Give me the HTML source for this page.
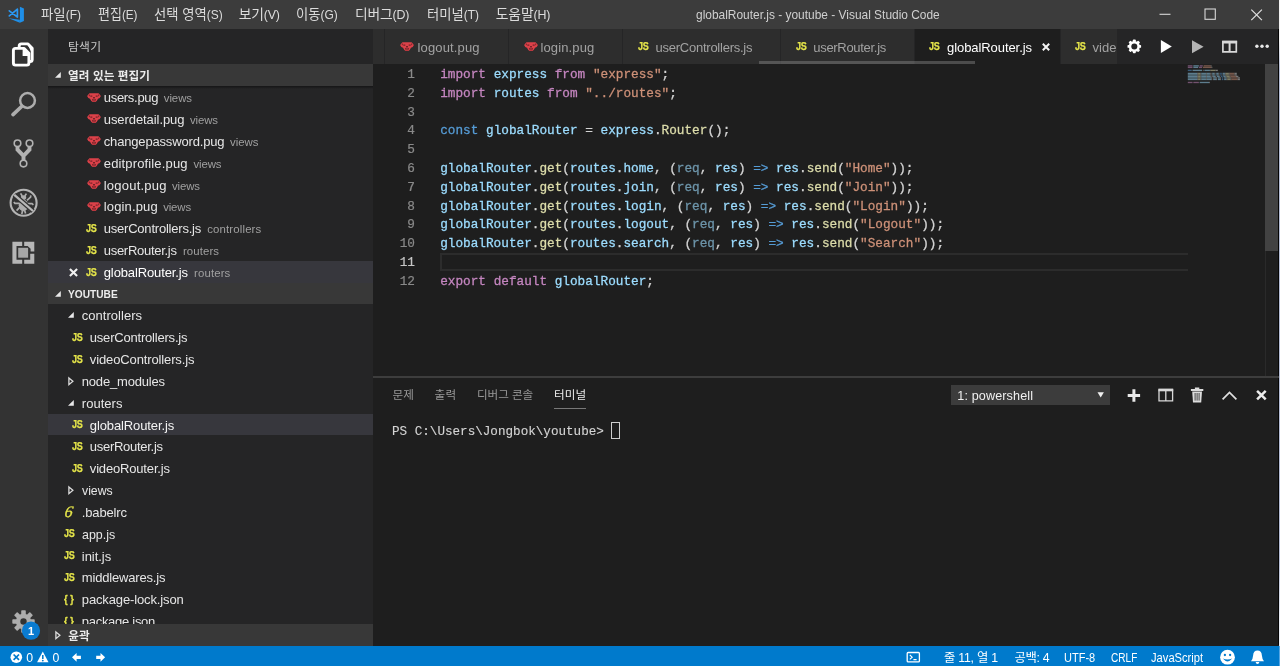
<!DOCTYPE html>
<html lang="ko"><head><meta charset="utf-8"><title>globalRouter.js - youtube - Visual Studio Code</title>
<style>
html,body{margin:0;padding:0;background:#1e1e1e;overflow:hidden}
body{width:1280px;height:666px;position:relative;font-family:'Liberation Sans','Noto Sans CJK KR',sans-serif}
#w{position:absolute;left:0;top:0;width:1280px;height:666px;will-change:transform}
.t{position:absolute;white-space:pre;line-height:20px;height:20px}
svg{position:absolute;overflow:visible}

.js{position:absolute;font-weight:700;color:#e4e44a;-webkit-text-stroke:.25px #e4e44a;font-size:11.6px;line-height:12px;height:12px;transform:scaleX(.78);transform-origin:0 50%;letter-spacing:-.2px;white-space:pre}
.br{position:absolute;font-weight:700;color:#e4e44a;font-size:11.5px;line-height:12px;height:12px;white-space:pre;letter-spacing:3.4px;transform:scaleX(.8);transform-origin:0 50%;-webkit-text-stroke:.3px #e4e44a}
.code{position:absolute;white-space:pre;font-family:'Liberation Mono','Noto Sans CJK KR',monospace;font-size:12.73px;line-height:18.8px;height:18.8px;color:#d4d4d4;-webkit-text-stroke:.28px}
.k{color:#c586c0}.v{color:#9cdcfe}.s{color:#ce9178}.b{color:#569cd6}.f{color:#dcdcaa}.u{color:#9cdcfe;opacity:.62}
.ln{position:absolute;white-space:pre;font-family:'Liberation Mono',monospace;font-size:12.73px;line-height:18.8px;height:18.8px;color:#8a8a8a;text-align:right;width:40px;-webkit-text-stroke:.2px}

</style></head><body><div id="w">
<div style="position:absolute;left:0px;top:0px;width:1280px;height:29.3px;background:#3c3c3c;"></div><div style="position:absolute;left:0px;top:29.3px;width:48px;height:616.7px;background:#333333;"></div><div style="position:absolute;left:48px;top:29.3px;width:324.5px;height:616.7px;background:#252526;"></div><div style="position:absolute;left:372.5px;top:29.3px;width:907.5px;height:35px;background:#252526;"></div><div style="position:absolute;left:372.5px;top:64.3px;width:907.5px;height:581.7px;background:#1e1e1e;"></div><div style="position:absolute;left:0px;top:645.5px;width:1280px;height:20.5px;background:#007acc;"></div><div style="position:absolute;left:48px;top:64.2px;width:324.5px;height:21.9px;background:#383838;"></div><div style="position:absolute;left:48px;top:282.6px;width:324.5px;height:21.6px;background:#383838;"></div><div style="position:absolute;left:48px;top:624.4px;width:324.5px;height:21.6px;background:#383838;z-index:5"></div><div style="position:absolute;left:48px;top:86.1px;width:324.5px;height:3.2px;background:linear-gradient(rgba(0,0,0,.42),rgba(0,0,0,0));"></div><div style="position:absolute;left:48px;top:261px;width:324.5px;height:21.6px;background:#37373d;"></div><div style="position:absolute;left:48px;top:413.7px;width:324.5px;height:21.6px;background:#37373d;"></div><svg style="left:0;top:0" width="40" height="29" viewBox="0 0 40 29">
<path d="M19.9 6.7 L23.9 8.4 V20.9 L19.9 22.7Z" fill="#1f8fe8"/>
<path d="M8.6 18.2 L19.9 19.7 V22.7 Z" fill="#1f8fe8"/>
<path d="M9.3 10.8 L17.4 17 V9.2 L9.3 15.9" fill="none" stroke="#2a98f2" stroke-width="1.7" stroke-linejoin="round" stroke-linecap="round"/>
</svg><svg style="left:1150px;top:0" width="130" height="29" viewBox="0 0 130 29">
<path d="M9.5 14.3h11" stroke="#d8d8d8" stroke-width="1.1" fill="none"/>
<rect x="55" y="9" width="10.3" height="10.3" stroke="#d8d8d8" stroke-width="1.1" fill="none"/>
<path d="M101.3 9.6 L111.9 20.2 M111.9 9.6 L101.3 20.2" stroke="#e0e0e0" stroke-width="1.2" fill="none"/></svg><svg style="left:0;top:29px" width="48" height="617" viewBox="0 29 48 617">
<!-- files -->
<g fill="none" stroke="#fff" stroke-width="2.9" stroke-linejoin="round">
<path d="M19.2 47 V46 Q19.2 43.9 21.3 43.9 H28 L32.2 48.2 V59.4 Q32.2 61.5 30.1 61.5 H29.4"/>
<path d="M15.5 48.4 H24.2 L28.9 53.2 V63 Q28.9 65.1 26.8 65.1 H15.5 Q13.4 65.1 13.4 63 V50.5 Q13.4 48.4 15.5 48.4Z"/>
</g>
<path d="M22.6 48.4 H24.6 L29 53 V56 H22.6Z" fill="#fff"/>
<path d="M27.4 43.9 H28.2 L32.3 48 V51 H30.8 Z" fill="#fff"/>
<!-- search -->
<g fill="none" stroke="#adadad">
<circle cx="27.5" cy="100.5" r="7.4" stroke-width="2.5"/>
<path d="M21.6 106.5 L13 114.6" stroke-width="3.7" stroke-linecap="round"/>
</g>
<!-- git -->
<g fill="none" stroke="#b2b2b2">
<path d="M17.5 146.5 V149.6 L23.5 155.8 V160.5 M29.5 146.5 V149.6 L23.5 155.8" stroke-width="3.9" stroke-linejoin="miter"/>
<circle cx="17.5" cy="143.3" r="3.3" stroke-width="1.6" fill="#333"/>
<circle cx="29.5" cy="143.3" r="3.3" stroke-width="1.6" fill="#333"/>
<circle cx="23.5" cy="163.6" r="3.3" stroke-width="1.6" fill="#333"/>
</g>
<!-- debug -->
<g>
<circle cx="23.6" cy="202.8" r="13" fill="none" stroke="#b4b4b4" stroke-width="2.1"/>
<g fill="#adadad" stroke="#adadad">
<ellipse cx="23.4" cy="205.3" rx="4.7" ry="5.9" stroke="none"/>
<ellipse cx="23.5" cy="197.6" rx="2.7" ry="2.3" stroke="none"/>
<path d="M19 203.4 H15 L13.8 202 M19.4 207.6 L16.6 210.6 M28 203.6 H32 L33.4 204.8 M27 200.4 L30.6 197 L30.8 195.4 M27.4 207.6 L30.2 210.6 M22.2 196 L20.6 193.4 M24.8 196 L26.4 193.6 M22.6 210.4 L21.8 214 M24.6 210.4 L25.6 213.6" stroke-width="1.7" fill="none"/>
</g>
<path d="M14.3 194.8 L33 211" stroke="#333" stroke-width="4.8"/>
<path d="M14.3 194.8 L33 211" stroke="#b9b9b9" stroke-width="2.3"/>
</g>
<!-- extensions -->
<g fill="#b6b6b6">
<path d="M12.4 241.8 H22.2 V245.9 H16.5 V259.7 H22.2 V263.8 H12.4 Z"/>
<path d="M24.2 241.8 H34.3 V251.6 H30.6 V248.8 L27.6 245.9 H24.2 Z"/>
<path d="M24.2 259.7 H30.2 V253.7 H34.3 V263.8 H24.2 Z"/>
<rect x="18.2" y="247.8" width="9.9" height="9.9" fill="#a6a6a6"/>
</g>
<!-- gear -->
<g transform="translate(23.5 621.5)" fill="#adadad">
<circle r="7.7"/>
<g id="teeth"><rect x="-2.3" y="-11.2" width="4.6" height="22.4" rx=".8"/><rect x="-2.3" y="-11.2" width="4.6" height="22.4" rx=".8" transform="rotate(45)"/><rect x="-2.3" y="-11.2" width="4.6" height="22.4" rx=".8" transform="rotate(90)"/><rect x="-2.3" y="-11.2" width="4.6" height="22.4" rx=".8" transform="rotate(135)"/></g>
<circle r="3.2" fill="#333"/>
</g>
<circle cx="31" cy="630.7" r="9.1" fill="#0a7bd0"/>
</svg><svg style="left:55.1px;top:72.3px;" width="6" height="6" viewBox="0 0 6 6"><path d="M5.8 0 V5.8 H0Z" fill="#e8e8e8"/></svg><svg style="left:55.1px;top:290.59999999999997px;" width="6" height="6" viewBox="0 0 6 6"><path d="M5.8 0 V5.8 H0Z" fill="#e8e8e8"/></svg><svg style="left:54.6px;top:631.1999999999999px;z-index:6;" width="6" height="9" viewBox="0 0 6 9"><path d="M0.9 0.9 L4.9 4.3 L0.9 7.7Z" fill="none" stroke="#dcdcdc" stroke-width="1.3"/></svg><svg style="left:86.5px;top:92.51499999999999px" width="14" height="9.2" viewBox="0 0 14 9.2"><path d="M2.4 0.2 H11.6 L13.9 3 L12.7 4.9 L11 5.7 L9.7 8.1 L8.3 9 H5.7 L4.3 8.1 L3 5.7 L1.3 4.9 L0.1 3Z" fill="#dc4149"/><path d="M3.3 2.4h2v1.4H3.3zM8.7 2.4h2v1.4H8.7zM6 3.9h2v1.4H6zM5 6.3 L6.6 5.6 V8.6 H5.9Z M9 6.3 L7.4 5.6 V8.6 H8.1Z M1.6 2.6 L3 1 L2.6 3.6Z M12.4 2.6 L11 1 L11.4 3.6Z" fill="#5a1c20" opacity=".8"/></svg><svg style="left:86.5px;top:114.345px" width="14" height="9.2" viewBox="0 0 14 9.2"><path d="M2.4 0.2 H11.6 L13.9 3 L12.7 4.9 L11 5.7 L9.7 8.1 L8.3 9 H5.7 L4.3 8.1 L3 5.7 L1.3 4.9 L0.1 3Z" fill="#dc4149"/><path d="M3.3 2.4h2v1.4H3.3zM8.7 2.4h2v1.4H8.7zM6 3.9h2v1.4H6zM5 6.3 L6.6 5.6 V8.6 H5.9Z M9 6.3 L7.4 5.6 V8.6 H8.1Z M1.6 2.6 L3 1 L2.6 3.6Z M12.4 2.6 L11 1 L11.4 3.6Z" fill="#5a1c20" opacity=".8"/></svg><svg style="left:86.5px;top:136.17499999999998px" width="14" height="9.2" viewBox="0 0 14 9.2"><path d="M2.4 0.2 H11.6 L13.9 3 L12.7 4.9 L11 5.7 L9.7 8.1 L8.3 9 H5.7 L4.3 8.1 L3 5.7 L1.3 4.9 L0.1 3Z" fill="#dc4149"/><path d="M3.3 2.4h2v1.4H3.3zM8.7 2.4h2v1.4H8.7zM6 3.9h2v1.4H6zM5 6.3 L6.6 5.6 V8.6 H5.9Z M9 6.3 L7.4 5.6 V8.6 H8.1Z M1.6 2.6 L3 1 L2.6 3.6Z M12.4 2.6 L11 1 L11.4 3.6Z" fill="#5a1c20" opacity=".8"/></svg><svg style="left:86.5px;top:158.00499999999997px" width="14" height="9.2" viewBox="0 0 14 9.2"><path d="M2.4 0.2 H11.6 L13.9 3 L12.7 4.9 L11 5.7 L9.7 8.1 L8.3 9 H5.7 L4.3 8.1 L3 5.7 L1.3 4.9 L0.1 3Z" fill="#dc4149"/><path d="M3.3 2.4h2v1.4H3.3zM8.7 2.4h2v1.4H8.7zM6 3.9h2v1.4H6zM5 6.3 L6.6 5.6 V8.6 H5.9Z M9 6.3 L7.4 5.6 V8.6 H8.1Z M1.6 2.6 L3 1 L2.6 3.6Z M12.4 2.6 L11 1 L11.4 3.6Z" fill="#5a1c20" opacity=".8"/></svg><svg style="left:86.5px;top:179.83499999999998px" width="14" height="9.2" viewBox="0 0 14 9.2"><path d="M2.4 0.2 H11.6 L13.9 3 L12.7 4.9 L11 5.7 L9.7 8.1 L8.3 9 H5.7 L4.3 8.1 L3 5.7 L1.3 4.9 L0.1 3Z" fill="#dc4149"/><path d="M3.3 2.4h2v1.4H3.3zM8.7 2.4h2v1.4H8.7zM6 3.9h2v1.4H6zM5 6.3 L6.6 5.6 V8.6 H5.9Z M9 6.3 L7.4 5.6 V8.6 H8.1Z M1.6 2.6 L3 1 L2.6 3.6Z M12.4 2.6 L11 1 L11.4 3.6Z" fill="#5a1c20" opacity=".8"/></svg><svg style="left:86.5px;top:201.665px" width="14" height="9.2" viewBox="0 0 14 9.2"><path d="M2.4 0.2 H11.6 L13.9 3 L12.7 4.9 L11 5.7 L9.7 8.1 L8.3 9 H5.7 L4.3 8.1 L3 5.7 L1.3 4.9 L0.1 3Z" fill="#dc4149"/><path d="M3.3 2.4h2v1.4H3.3zM8.7 2.4h2v1.4H8.7zM6 3.9h2v1.4H6zM5 6.3 L6.6 5.6 V8.6 H5.9Z M9 6.3 L7.4 5.6 V8.6 H8.1Z M1.6 2.6 L3 1 L2.6 3.6Z M12.4 2.6 L11 1 L11.4 3.6Z" fill="#5a1c20" opacity=".8"/></svg><span class="js" style="left:86.3px;top:221.89499999999998px">JS</span><span class="js" style="left:86.3px;top:243.725px">JS</span><span class="js" style="left:86.3px;top:265.555px">JS</span><svg style="left:69.4px;top:267.7px" width="9" height="9" viewBox="0 0 9 9"><path d="M0.9 0.9 L8.1 8.1 M8.1 0.9 L0.9 8.1" stroke="#f0f0f0" stroke-width="2.1"/></svg><svg style="left:68.4px;top:312.315px;" width="6" height="6" viewBox="0 0 6 6"><path d="M5.8 0 V5.8 H0Z" fill="#e8e8e8"/></svg><span class="js" style="left:72.4px;top:330.945px">JS</span><span class="js" style="left:72.4px;top:352.77500000000003px">JS</span><svg style="left:68.2px;top:376.90500000000003px;" width="6" height="9" viewBox="0 0 6 9"><path d="M0.9 0.9 L4.9 4.3 L0.9 7.7Z" fill="none" stroke="#dcdcdc" stroke-width="1.3"/></svg><svg style="left:68.4px;top:399.635px;" width="6" height="6" viewBox="0 0 6 6"><path d="M5.8 0 V5.8 H0Z" fill="#e8e8e8"/></svg><span class="js" style="left:72.4px;top:418.265px">JS</span><span class="js" style="left:72.4px;top:440.09499999999997px">JS</span><span class="js" style="left:72.4px;top:461.925px">JS</span><svg style="left:68.2px;top:486.055px;" width="6" height="9" viewBox="0 0 6 9"><path d="M0.9 0.9 L4.9 4.3 L0.9 7.7Z" fill="none" stroke="#dcdcdc" stroke-width="1.3"/></svg><span style="position:absolute;left:64.5px;top:503.685px;font:italic 400 16px/16px 'Liberation Serif',serif;color:#e4e44a;transform:skewX(-10deg);-webkit-text-stroke:.3px #e4e44a">6</span><span class="js" style="left:64.4px;top:527.415px">JS</span><span class="js" style="left:64.4px;top:549.245px">JS</span><span class="js" style="left:64.4px;top:571.0749999999999px">JS</span><span class="br" style="left:63.6px;top:592.9049999999999px">{}</span><span class="br" style="left:63.6px;top:614.735px">{}</span><div style="position:absolute;left:372.5px;top:29.3px;width:11.5px;height:35px;background:#2d2d2d;"></div><div style="position:absolute;left:384.6px;top:29.3px;width:123px;height:35px;background:#2d2d2d;"></div><div style="position:absolute;left:508.6px;top:29.3px;width:113.6px;height:35px;background:#2d2d2d;"></div><div style="position:absolute;left:623px;top:29.3px;width:157.2px;height:35px;background:#2d2d2d;"></div><div style="position:absolute;left:781px;top:29.3px;width:133.2px;height:35px;background:#2d2d2d;"></div><div style="position:absolute;left:915px;top:29.3px;width:145px;height:35px;background:#1e1e1e;"></div><div style="position:absolute;left:1060.6px;top:29.3px;width:56.4px;height:35px;background:#2d2d2d;"></div><div style="position:absolute;left:1117px;top:29.3px;width:163px;height:35px;background:#252526;"></div><div style="position:absolute;left:758.8px;top:61.2px;width:216.2px;height:3.2px;background:rgba(140,140,140,.42);"></div><svg style="left:400.3px;top:42.400000000000006px" width="14" height="9.2" viewBox="0 0 14 9.2"><path d="M2.4 0.2 H11.6 L13.9 3 L12.7 4.9 L11 5.7 L9.7 8.1 L8.3 9 H5.7 L4.3 8.1 L3 5.7 L1.3 4.9 L0.1 3Z" fill="#dc4149"/><path d="M3.3 2.4h2v1.4H3.3zM8.7 2.4h2v1.4H8.7zM6 3.9h2v1.4H6zM5 6.3 L6.6 5.6 V8.6 H5.9Z M9 6.3 L7.4 5.6 V8.6 H8.1Z M1.6 2.6 L3 1 L2.6 3.6Z M12.4 2.6 L11 1 L11.4 3.6Z" fill="#5a1c20" opacity=".8"/></svg><svg style="left:523.8px;top:42.400000000000006px" width="14" height="9.2" viewBox="0 0 14 9.2"><path d="M2.4 0.2 H11.6 L13.9 3 L12.7 4.9 L11 5.7 L9.7 8.1 L8.3 9 H5.7 L4.3 8.1 L3 5.7 L1.3 4.9 L0.1 3Z" fill="#dc4149"/><path d="M3.3 2.4h2v1.4H3.3zM8.7 2.4h2v1.4H8.7zM6 3.9h2v1.4H6zM5 6.3 L6.6 5.6 V8.6 H5.9Z M9 6.3 L7.4 5.6 V8.6 H8.1Z M1.6 2.6 L3 1 L2.6 3.6Z M12.4 2.6 L11 1 L11.4 3.6Z" fill="#5a1c20" opacity=".8"/></svg><span class="js" style="left:638px;top:40.4px">JS</span><span class="js" style="left:795.6px;top:40.4px">JS</span><span class="js" style="left:929.4px;top:40.4px">JS</span><svg style="left:1042.3px;top:42.9px" width="8" height="8" viewBox="0 0 8 8"><path d="M0.8 0.8 L7.2 7.2 M7.2 0.8 L0.8 7.2" stroke="#f4f4f4" stroke-width="2"/></svg><span class="js" style="left:1075px;top:40.4px">JS</span><svg style="left:1117px;top:29.3px" width="163" height="35" viewBox="1117 29.3 163 35">
<g transform="translate(1134.3 46.7)" fill="#fff"><circle r="5.5"/>
<rect x="-1.45" y="-6.8" width="2.9" height="13.6" rx=".7"/><rect x="-1.45" y="-6.8" width="2.9" height="13.6" rx=".7" transform="rotate(45)"/><rect x="-1.45" y="-6.8" width="2.9" height="13.6" rx=".7" transform="rotate(90)"/><rect x="-1.45" y="-6.8" width="2.9" height="13.6" rx=".7" transform="rotate(135)"/>
<circle r="3" fill="#252526"/></g>
<path d="M1160.9 40.4 L1171.8 46.9 L1160.9 53.4Z" fill="#fff"/>
<path d="M1192 40.6 L1203.6 47.1 L1192 53.6Z" fill="#b4b4b4"/>
<path d="M1222.9 42.2 H1236.3 V52.2 H1222.9Z" fill="none" stroke="#d8d8d8" stroke-width="1.7"/><path d="M1229.6 43 V52.4" fill="none" stroke="#d8d8d8" stroke-width="2"/>
<path d="M1222.1 40.9 H1237.1 V43.8 H1222.1Z" fill="#d8d8d8"/>
<circle cx="1256.9" cy="46.5" r="1.7" fill="#e8e8e8"/><circle cx="1262" cy="46.5" r="1.7" fill="#e8e8e8"/><circle cx="1267.2" cy="46.5" r="1.7" fill="#e8e8e8"/>
</svg><div style="position:absolute;left:440.4px;top:253.3px;width:747.4px;height:2.1px;background:#2c2c2c;"></div><div style="position:absolute;left:440.4px;top:268.6px;width:747.4px;height:2.1px;background:#2c2c2c;"></div><div style="position:absolute;left:440.4px;top:253.3px;width:2px;height:17.4px;background:#2c2c2c;"></div><div class="ln" style="left:375px;top:66.00px">1</div><div class="code" style="left:440.2px;top:66.00px"><span class="k">import</span> <span class="v">express</span> <span class="k">from</span> <span class="s">"express"</span>;</div><div class="ln" style="left:375px;top:84.80px">2</div><div class="code" style="left:440.2px;top:84.80px"><span class="k">import</span> <span class="v">routes</span> <span class="k">from</span> <span class="s">"../routes"</span>;</div><div class="ln" style="left:375px;top:103.60px">3</div><div class="ln" style="left:375px;top:122.40px">4</div><div class="code" style="left:440.2px;top:122.40px"><span class="b">const</span> <span class="v">globalRouter</span> = <span class="v">express</span>.<span class="f">Router</span>();</div><div class="ln" style="left:375px;top:141.20px">5</div><div class="ln" style="left:375px;top:160.00px">6</div><div class="code" style="left:440.2px;top:160.00px"><span class="v">globalRouter</span>.<span class="f">get</span>(<span class="v">routes</span>.<span class="v">home</span>, (<span class="u">req</span>, <span class="v">res</span>) <span class="b">=&gt;</span> <span class="v">res</span>.<span class="f">send</span>(<span class="s">"Home"</span>));</div><div class="ln" style="left:375px;top:178.80px">7</div><div class="code" style="left:440.2px;top:178.80px"><span class="v">globalRouter</span>.<span class="f">get</span>(<span class="v">routes</span>.<span class="v">join</span>, (<span class="u">req</span>, <span class="v">res</span>) <span class="b">=&gt;</span> <span class="v">res</span>.<span class="f">send</span>(<span class="s">"Join"</span>));</div><div class="ln" style="left:375px;top:197.60px">8</div><div class="code" style="left:440.2px;top:197.60px"><span class="v">globalRouter</span>.<span class="f">get</span>(<span class="v">routes</span>.<span class="v">login</span>, (<span class="u">req</span>, <span class="v">res</span>) <span class="b">=&gt;</span> <span class="v">res</span>.<span class="f">send</span>(<span class="s">"Login"</span>));</div><div class="ln" style="left:375px;top:216.40px">9</div><div class="code" style="left:440.2px;top:216.40px"><span class="v">globalRouter</span>.<span class="f">get</span>(<span class="v">routes</span>.<span class="v">logout</span>, (<span class="u">req</span>, <span class="v">res</span>) <span class="b">=&gt;</span> <span class="v">res</span>.<span class="f">send</span>(<span class="s">"Logout"</span>));</div><div class="ln" style="left:375px;top:235.20px">10</div><div class="code" style="left:440.2px;top:235.20px"><span class="v">globalRouter</span>.<span class="f">get</span>(<span class="v">routes</span>.<span class="v">search</span>, (<span class="u">req</span>, <span class="v">res</span>) <span class="b">=&gt;</span> <span class="v">res</span>.<span class="f">send</span>(<span class="s">"Search"</span>));</div><div class="ln" style="left:375px;top:254.00px;color:#c6c6c6">11</div><div class="ln" style="left:375px;top:272.80px">12</div><div class="code" style="left:440.2px;top:272.80px"><span class="k">export</span> <span class="k">default</span> <span class="v">globalRouter</span>;</div><svg style="left:0;top:0" width="1280" height="100" viewBox="0 0 1280 100" opacity=".5"><rect x="1187.80" y="65.20" width="4.74" height="1.35" fill="#c586c0"/><rect x="1193.33" y="65.20" width="5.53" height="1.35" fill="#9cdcfe"/><rect x="1199.65" y="65.20" width="3.16" height="1.35" fill="#c586c0"/><rect x="1203.60" y="65.20" width="7.11" height="1.35" fill="#ce9178"/><rect x="1210.71" y="65.20" width="0.79" height="1.35" fill="#d4d4d4"/><rect x="1187.80" y="66.71" width="4.74" height="1.35" fill="#c586c0"/><rect x="1193.33" y="66.71" width="4.74" height="1.35" fill="#9cdcfe"/><rect x="1198.86" y="66.71" width="3.16" height="1.35" fill="#c586c0"/><rect x="1202.81" y="66.71" width="8.69" height="1.35" fill="#ce9178"/><rect x="1211.50" y="66.71" width="0.79" height="1.35" fill="#d4d4d4"/><rect x="1187.80" y="69.73" width="3.95" height="1.35" fill="#569cd6"/><rect x="1192.54" y="69.73" width="9.48" height="1.35" fill="#9cdcfe"/><rect x="1202.81" y="69.73" width="0.79" height="1.35" fill="#d4d4d4"/><rect x="1204.39" y="69.73" width="5.53" height="1.35" fill="#9cdcfe"/><rect x="1209.92" y="69.73" width="0.79" height="1.35" fill="#d4d4d4"/><rect x="1210.71" y="69.73" width="4.74" height="1.35" fill="#dcdcaa"/><rect x="1215.45" y="69.73" width="2.37" height="1.35" fill="#d4d4d4"/><rect x="1187.80" y="72.75" width="9.48" height="1.35" fill="#9cdcfe"/><rect x="1197.28" y="72.75" width="0.79" height="1.35" fill="#d4d4d4"/><rect x="1198.07" y="72.75" width="2.37" height="1.35" fill="#dcdcaa"/><rect x="1200.44" y="72.75" width="0.79" height="1.35" fill="#d4d4d4"/><rect x="1201.23" y="72.75" width="4.74" height="1.35" fill="#9cdcfe"/><rect x="1205.97" y="72.75" width="0.79" height="1.35" fill="#d4d4d4"/><rect x="1206.76" y="72.75" width="3.16" height="1.35" fill="#9cdcfe"/><rect x="1209.92" y="72.75" width="0.79" height="1.35" fill="#d4d4d4"/><rect x="1211.50" y="72.75" width="0.79" height="1.35" fill="#d4d4d4"/><rect x="1212.29" y="72.75" width="2.37" height="1.35" fill="#9cdcfe"/><rect x="1214.66" y="72.75" width="0.79" height="1.35" fill="#d4d4d4"/><rect x="1216.24" y="72.75" width="2.37" height="1.35" fill="#9cdcfe"/><rect x="1218.61" y="72.75" width="0.79" height="1.35" fill="#d4d4d4"/><rect x="1220.19" y="72.75" width="1.58" height="1.35" fill="#569cd6"/><rect x="1222.56" y="72.75" width="2.37" height="1.35" fill="#9cdcfe"/><rect x="1224.93" y="72.75" width="0.79" height="1.35" fill="#d4d4d4"/><rect x="1225.72" y="72.75" width="3.16" height="1.35" fill="#dcdcaa"/><rect x="1228.88" y="72.75" width="0.79" height="1.35" fill="#d4d4d4"/><rect x="1229.67" y="72.75" width="4.74" height="1.35" fill="#ce9178"/><rect x="1234.41" y="72.75" width="2.37" height="1.35" fill="#d4d4d4"/><rect x="1187.80" y="74.26" width="9.48" height="1.35" fill="#9cdcfe"/><rect x="1197.28" y="74.26" width="0.79" height="1.35" fill="#d4d4d4"/><rect x="1198.07" y="74.26" width="2.37" height="1.35" fill="#dcdcaa"/><rect x="1200.44" y="74.26" width="0.79" height="1.35" fill="#d4d4d4"/><rect x="1201.23" y="74.26" width="4.74" height="1.35" fill="#9cdcfe"/><rect x="1205.97" y="74.26" width="0.79" height="1.35" fill="#d4d4d4"/><rect x="1206.76" y="74.26" width="3.16" height="1.35" fill="#9cdcfe"/><rect x="1209.92" y="74.26" width="0.79" height="1.35" fill="#d4d4d4"/><rect x="1211.50" y="74.26" width="0.79" height="1.35" fill="#d4d4d4"/><rect x="1212.29" y="74.26" width="2.37" height="1.35" fill="#9cdcfe"/><rect x="1214.66" y="74.26" width="0.79" height="1.35" fill="#d4d4d4"/><rect x="1216.24" y="74.26" width="2.37" height="1.35" fill="#9cdcfe"/><rect x="1218.61" y="74.26" width="0.79" height="1.35" fill="#d4d4d4"/><rect x="1220.19" y="74.26" width="1.58" height="1.35" fill="#569cd6"/><rect x="1222.56" y="74.26" width="2.37" height="1.35" fill="#9cdcfe"/><rect x="1224.93" y="74.26" width="0.79" height="1.35" fill="#d4d4d4"/><rect x="1225.72" y="74.26" width="3.16" height="1.35" fill="#dcdcaa"/><rect x="1228.88" y="74.26" width="0.79" height="1.35" fill="#d4d4d4"/><rect x="1229.67" y="74.26" width="4.74" height="1.35" fill="#ce9178"/><rect x="1234.41" y="74.26" width="2.37" height="1.35" fill="#d4d4d4"/><rect x="1187.80" y="75.77" width="9.48" height="1.35" fill="#9cdcfe"/><rect x="1197.28" y="75.77" width="0.79" height="1.35" fill="#d4d4d4"/><rect x="1198.07" y="75.77" width="2.37" height="1.35" fill="#dcdcaa"/><rect x="1200.44" y="75.77" width="0.79" height="1.35" fill="#d4d4d4"/><rect x="1201.23" y="75.77" width="4.74" height="1.35" fill="#9cdcfe"/><rect x="1205.97" y="75.77" width="0.79" height="1.35" fill="#d4d4d4"/><rect x="1206.76" y="75.77" width="3.95" height="1.35" fill="#9cdcfe"/><rect x="1210.71" y="75.77" width="0.79" height="1.35" fill="#d4d4d4"/><rect x="1212.29" y="75.77" width="0.79" height="1.35" fill="#d4d4d4"/><rect x="1213.08" y="75.77" width="2.37" height="1.35" fill="#9cdcfe"/><rect x="1215.45" y="75.77" width="0.79" height="1.35" fill="#d4d4d4"/><rect x="1217.03" y="75.77" width="2.37" height="1.35" fill="#9cdcfe"/><rect x="1219.40" y="75.77" width="0.79" height="1.35" fill="#d4d4d4"/><rect x="1220.98" y="75.77" width="1.58" height="1.35" fill="#569cd6"/><rect x="1223.35" y="75.77" width="2.37" height="1.35" fill="#9cdcfe"/><rect x="1225.72" y="75.77" width="0.79" height="1.35" fill="#d4d4d4"/><rect x="1226.51" y="75.77" width="3.16" height="1.35" fill="#dcdcaa"/><rect x="1229.67" y="75.77" width="0.79" height="1.35" fill="#d4d4d4"/><rect x="1230.46" y="75.77" width="5.53" height="1.35" fill="#ce9178"/><rect x="1235.99" y="75.77" width="2.37" height="1.35" fill="#d4d4d4"/><rect x="1187.80" y="77.28" width="9.48" height="1.35" fill="#9cdcfe"/><rect x="1197.28" y="77.28" width="0.79" height="1.35" fill="#d4d4d4"/><rect x="1198.07" y="77.28" width="2.37" height="1.35" fill="#dcdcaa"/><rect x="1200.44" y="77.28" width="0.79" height="1.35" fill="#d4d4d4"/><rect x="1201.23" y="77.28" width="4.74" height="1.35" fill="#9cdcfe"/><rect x="1205.97" y="77.28" width="0.79" height="1.35" fill="#d4d4d4"/><rect x="1206.76" y="77.28" width="4.74" height="1.35" fill="#9cdcfe"/><rect x="1211.50" y="77.28" width="0.79" height="1.35" fill="#d4d4d4"/><rect x="1213.08" y="77.28" width="0.79" height="1.35" fill="#d4d4d4"/><rect x="1213.87" y="77.28" width="2.37" height="1.35" fill="#9cdcfe"/><rect x="1216.24" y="77.28" width="0.79" height="1.35" fill="#d4d4d4"/><rect x="1217.82" y="77.28" width="2.37" height="1.35" fill="#9cdcfe"/><rect x="1220.19" y="77.28" width="0.79" height="1.35" fill="#d4d4d4"/><rect x="1221.77" y="77.28" width="1.58" height="1.35" fill="#569cd6"/><rect x="1224.14" y="77.28" width="2.37" height="1.35" fill="#9cdcfe"/><rect x="1226.51" y="77.28" width="0.79" height="1.35" fill="#d4d4d4"/><rect x="1227.30" y="77.28" width="3.16" height="1.35" fill="#dcdcaa"/><rect x="1230.46" y="77.28" width="0.79" height="1.35" fill="#d4d4d4"/><rect x="1231.25" y="77.28" width="6.32" height="1.35" fill="#ce9178"/><rect x="1237.57" y="77.28" width="2.37" height="1.35" fill="#d4d4d4"/><rect x="1187.80" y="78.79" width="9.48" height="1.35" fill="#9cdcfe"/><rect x="1197.28" y="78.79" width="0.79" height="1.35" fill="#d4d4d4"/><rect x="1198.07" y="78.79" width="2.37" height="1.35" fill="#dcdcaa"/><rect x="1200.44" y="78.79" width="0.79" height="1.35" fill="#d4d4d4"/><rect x="1201.23" y="78.79" width="4.74" height="1.35" fill="#9cdcfe"/><rect x="1205.97" y="78.79" width="0.79" height="1.35" fill="#d4d4d4"/><rect x="1206.76" y="78.79" width="4.74" height="1.35" fill="#9cdcfe"/><rect x="1211.50" y="78.79" width="0.79" height="1.35" fill="#d4d4d4"/><rect x="1213.08" y="78.79" width="0.79" height="1.35" fill="#d4d4d4"/><rect x="1213.87" y="78.79" width="2.37" height="1.35" fill="#9cdcfe"/><rect x="1216.24" y="78.79" width="0.79" height="1.35" fill="#d4d4d4"/><rect x="1217.82" y="78.79" width="2.37" height="1.35" fill="#9cdcfe"/><rect x="1220.19" y="78.79" width="0.79" height="1.35" fill="#d4d4d4"/><rect x="1221.77" y="78.79" width="1.58" height="1.35" fill="#569cd6"/><rect x="1224.14" y="78.79" width="2.37" height="1.35" fill="#9cdcfe"/><rect x="1226.51" y="78.79" width="0.79" height="1.35" fill="#d4d4d4"/><rect x="1227.30" y="78.79" width="3.16" height="1.35" fill="#dcdcaa"/><rect x="1230.46" y="78.79" width="0.79" height="1.35" fill="#d4d4d4"/><rect x="1231.25" y="78.79" width="6.32" height="1.35" fill="#ce9178"/><rect x="1237.57" y="78.79" width="2.37" height="1.35" fill="#d4d4d4"/><rect x="1187.80" y="81.81" width="4.74" height="1.35" fill="#c586c0"/><rect x="1193.33" y="81.81" width="5.53" height="1.35" fill="#c586c0"/><rect x="1199.65" y="81.81" width="9.48" height="1.35" fill="#9cdcfe"/><rect x="1209.13" y="81.81" width="0.79" height="1.35" fill="#d4d4d4"/></svg><div style="position:absolute;left:1265px;top:64.3px;width:0.8px;height:313px;background:#2a2a2a;"></div><div style="position:absolute;left:1265.4px;top:64.3px;width:13.3px;height:186.7px;background:#424242;"></div><div style="position:absolute;left:1278.2px;top:29.3px;width:1.1px;height:616.2px;background:#050505;"></div><div style="position:absolute;left:1279.3px;top:0px;width:0.7px;height:645.5px;background:linear-gradient(#f4f4f4 0,#f0f0f0 40px,#b4bcd4 70px,#b4bcd4 560px,#e8ecf4 620px);"></div><div style="position:absolute;left:1279.3px;top:645.5px;width:0.7px;height:20.5px;background:#55a6e4;"></div><div style="position:absolute;left:372.5px;top:376.2px;width:906px;height:1.5px;background:#3d3d3d;"></div><div style="position:absolute;left:554px;top:407.9px;width:32.3px;height:1px;background:#787878;"></div><div style="position:absolute;left:951.4px;top:384.6px;width:159.1px;height:20.8px;background:#3c3c3c;"></div><svg style="left:1090px;top:384px" width="190" height="22" viewBox="1090 384 190 22">
<path d="M1097.5 392.3 H1103.9 L1100.7 397.6Z" fill="#f0f0f0"/>
<path d="M1133.9 389.3 V401.7 M1127.7 395.5 H1140.1" stroke="#e8e8e8" stroke-width="3" fill="none"/>
<path d="M1159 390 H1172.6 V400.8 H1159Z M1165.8 391 V400.8" fill="none" stroke="#d8d8d8" stroke-width="1.3"/>
<path d="M1158.4 388.6 H1173.2 V391.3 H1158.4Z" fill="#d8d8d8"/>
<path d="M1192.2 391.6 H1202 L1201.2 402.4 H1193 Z" fill="#dcdcdc"/>
<path d="M1190.9 388.9 H1203.3 V390.9 H1190.9Z M1194.9 387.6 H1199.3 V389.2 H1194.9Z" fill="#dcdcdc"/>
<path d="M1195.1 393 V400.6 M1197.1 393 V400.6 M1199.1 393 V400.6" stroke="#1e1e1e" stroke-width=".8"/>
<path d="M1222.6 399.4 L1229.5 392.4 L1236.4 399.4" fill="none" stroke="#e0e0e0" stroke-width="1.7"/>
<path d="M1257.1 390.8 L1265.7 399.4 M1265.7 390.8 L1257.1 399.4" stroke="#ececec" stroke-width="2.5" fill="none"/>
</svg><div class="code" style="left:392px;top:423.20px;color:#d4d4d4;font-size:12.62px;-webkit-text-stroke:.12px">PS C:\Users\Jongbok\youtube&gt; </div><div style="position:absolute;left:611.4px;top:422.1px;width:6.9px;height:15.4px;border:1px solid #cfcfcf"></div><svg style="left:0;top:646px" width="1280" height="20" viewBox="0 646 1280 20">
<circle cx="16.3" cy="657.2" r="5.8" fill="#fff"/>
<path d="M13.6 654.5 L19 659.9 M19 654.5 L13.6 659.9" stroke="#007acc" stroke-width="1.7"/>
<path d="M42.8 651.5 L48.5 662.2 H37.1Z" fill="#fff"/>
<path d="M42.8 655 V659" stroke="#007acc" stroke-width="1.6"/><circle cx="42.8" cy="660.6" r=".9" fill="#007acc"/>
<path d="M72 657.3 L76.6 652.9 V655.7 H80.9 V658.9 H76.6 V661.7Z" fill="#fff"/>
<path d="M105.1 657.3 L100.5 652.9 V655.7 H96.2 V658.9 H100.5 V661.7Z" fill="#fff"/>
<rect x="907.2" y="652.5" width="12.2" height="9.4" rx="1" fill="none" stroke="#fff" stroke-width="1.3"/>
<path d="M909.8 655 L912.2 657.2 L909.8 659.4 M913.4 659.6 H916.6" stroke="#fff" stroke-width="1.1" fill="none"/>
<circle cx="1227.5" cy="657.2" r="7.4" fill="#fff"/>
<circle cx="1224.9" cy="655" r="1.15" fill="#007acc"/><circle cx="1230.1" cy="655" r="1.15" fill="#007acc"/>
<path d="M1222.8 658.6 Q1227.5 664.2 1232.2 658.6 Q1227.5 660.6 1222.8 658.6Z" fill="#007acc"/>
<path d="M1257.5 650.4 Q1261.6 650.4 1261.9 655.4 Q1262.2 659.4 1264 661.2 H1251 Q1252.8 659.4 1253.1 655.4 Q1253.4 650.4 1257.5 650.4Z" fill="#fff"/>
<path d="M1255.6 662 H1259.4 Q1259 663.9 1257.5 663.9 Q1256 663.9 1255.6 662Z" fill="#fff"/>
</svg>
<span class="t" style="left:41.25px;top:4.70px;font-family:'Liberation Sans','Noto Sans CJK KR',sans-serif;font-size:13.8px;color:#dcdcdc;font-weight:400;letter-spacing:0.000px;transform:scaleX(0.9701);transform-origin:0 50%;">파일<span style="font-size:90%">(F)</span></span><span class="t" style="left:97.50px;top:4.70px;font-family:'Liberation Sans','Noto Sans CJK KR',sans-serif;font-size:13.8px;color:#dcdcdc;font-weight:400;letter-spacing:0.000px;transform:scaleX(0.9419);transform-origin:0 50%;">편집<span style="font-size:90%">(E)</span></span><span class="t" style="left:153.75px;top:4.70px;font-family:'Liberation Sans','Noto Sans CJK KR',sans-serif;font-size:13.8px;color:#dcdcdc;font-weight:400;letter-spacing:0.000px;transform:scaleX(0.9662);transform-origin:0 50%;">선택 영역<span style="font-size:90%">(S)</span></span><span class="t" style="left:238.75px;top:4.70px;font-family:'Liberation Sans','Noto Sans CJK KR',sans-serif;font-size:13.8px;color:#dcdcdc;font-weight:400;letter-spacing:-0.172px;">보기<span style="font-size:90%">(V)</span></span><span class="t" style="left:296.25px;top:4.70px;font-family:'Liberation Sans','Noto Sans CJK KR',sans-serif;font-size:13.8px;color:#dcdcdc;font-weight:400;letter-spacing:0.000px;transform:scaleX(0.9639);transform-origin:0 50%;">이동<span style="font-size:90%">(G)</span></span><span class="t" style="left:355.00px;top:4.70px;font-family:'Liberation Sans','Noto Sans CJK KR',sans-serif;font-size:13.8px;color:#dcdcdc;font-weight:400;letter-spacing:-0.166px;">디버그<span style="font-size:90%">(D)</span></span><span class="t" style="left:427.00px;top:4.70px;font-family:'Liberation Sans','Noto Sans CJK KR',sans-serif;font-size:13.8px;color:#dcdcdc;font-weight:400;letter-spacing:0.000px;transform:scaleX(0.9641);transform-origin:0 50%;">터미널<span style="font-size:90%">(T)</span></span><span class="t" style="left:495.75px;top:4.70px;font-family:'Liberation Sans','Noto Sans CJK KR',sans-serif;font-size:13.8px;color:#dcdcdc;font-weight:400;letter-spacing:-0.116px;">도움말<span style="font-size:90%">(H)</span></span><span class="t" style="left:695.50px;top:5.10px;font-family:'Liberation Sans','Noto Sans CJK KR',sans-serif;font-size:12.9px;color:#d0d0d0;font-weight:400;letter-spacing:0.000px;transform:scaleX(0.9252);transform-origin:0 50%;">globalRouter.js - youtube - Visual Studio Code</span><span class="t" style="left:28.10px;top:621.00px;font-family:'Liberation Sans','Noto Sans CJK KR',sans-serif;font-size:11px;color:#fff;font-weight:700;letter-spacing:0.000px;">1</span><span class="t" style="left:68.00px;top:36.70px;font-family:'Liberation Sans','Noto Sans CJK KR',sans-serif;font-size:11.8px;color:#c8c8c8;font-weight:400;letter-spacing:0.219px;">탐색기</span><span class="t" style="left:68.00px;top:65.90px;font-family:'Liberation Sans','Noto Sans CJK KR',sans-serif;font-size:11.6px;color:#ececec;font-weight:700;letter-spacing:0.111px;">열려 있는 편집기</span><span class="t" style="left:68.10px;top:284.10px;font-family:'Liberation Sans','Noto Sans CJK KR',sans-serif;font-size:11.2px;color:#ececec;font-weight:700;letter-spacing:0.000px;transform:scaleX(0.9085);transform-origin:0 50%;">YOUTUBE</span><span class="t" style="left:68.20px;top:626.00px;font-family:'Liberation Sans','Noto Sans CJK KR',sans-serif;font-size:11.6px;color:#ececec;font-weight:700;letter-spacing:0.056px;z-index:6;">윤곽</span><span class="t" style="left:103.75px;top:88.21px;font-family:'Liberation Sans','Noto Sans CJK KR',sans-serif;font-size:13px;color:#e6e6e6;font-weight:400;letter-spacing:-0.293px;">users.pug</span><span class="t" style="left:163.75px;top:88.31px;font-family:'Liberation Sans','Noto Sans CJK KR',sans-serif;font-size:11.4px;color:#a0a0a0;font-weight:400;letter-spacing:-0.059px;">views</span><span class="t" style="left:103.75px;top:110.05px;font-family:'Liberation Sans','Noto Sans CJK KR',sans-serif;font-size:13px;color:#e6e6e6;font-weight:400;letter-spacing:-0.071px;">userdetail.pug</span><span class="t" style="left:190.00px;top:110.14px;font-family:'Liberation Sans','Noto Sans CJK KR',sans-serif;font-size:11.4px;color:#a0a0a0;font-weight:400;letter-spacing:-0.121px;">views</span><span class="t" style="left:103.75px;top:131.87px;font-family:'Liberation Sans','Noto Sans CJK KR',sans-serif;font-size:13px;color:#e6e6e6;font-weight:400;letter-spacing:-0.167px;">changepassword.pug</span><span class="t" style="left:230.00px;top:131.97px;font-family:'Liberation Sans','Noto Sans CJK KR',sans-serif;font-size:11.4px;color:#a0a0a0;font-weight:400;letter-spacing:0.004px;">views</span><span class="t" style="left:103.75px;top:153.70px;font-family:'Liberation Sans','Noto Sans CJK KR',sans-serif;font-size:13px;color:#e6e6e6;font-weight:400;letter-spacing:0.148px;">editprofile.pug</span><span class="t" style="left:193.50px;top:153.80px;font-family:'Liberation Sans','Noto Sans CJK KR',sans-serif;font-size:11.4px;color:#a0a0a0;font-weight:400;letter-spacing:-0.121px;">views</span><span class="t" style="left:103.75px;top:175.53px;font-family:'Liberation Sans','Noto Sans CJK KR',sans-serif;font-size:13px;color:#e6e6e6;font-weight:400;letter-spacing:0.224px;">logout.pug</span><span class="t" style="left:172.00px;top:175.63px;font-family:'Liberation Sans','Noto Sans CJK KR',sans-serif;font-size:11.4px;color:#a0a0a0;font-weight:400;letter-spacing:-0.121px;">views</span><span class="t" style="left:103.75px;top:197.36px;font-family:'Liberation Sans','Noto Sans CJK KR',sans-serif;font-size:13px;color:#e6e6e6;font-weight:400;letter-spacing:0.152px;">login.pug</span><span class="t" style="left:163.20px;top:197.47px;font-family:'Liberation Sans','Noto Sans CJK KR',sans-serif;font-size:11.4px;color:#a0a0a0;font-weight:400;letter-spacing:-0.146px;">views</span><span class="t" style="left:103.75px;top:219.19px;font-family:'Liberation Sans','Noto Sans CJK KR',sans-serif;font-size:13px;color:#e6e6e6;font-weight:400;letter-spacing:-0.215px;">userControllers.js</span><span class="t" style="left:207.25px;top:219.29px;font-family:'Liberation Sans','Noto Sans CJK KR',sans-serif;font-size:11.4px;color:#a0a0a0;font-weight:400;letter-spacing:0.145px;">controllers</span><span class="t" style="left:103.75px;top:241.02px;font-family:'Liberation Sans','Noto Sans CJK KR',sans-serif;font-size:13px;color:#e6e6e6;font-weight:400;letter-spacing:-0.287px;">userRouter.js</span><span class="t" style="left:182.90px;top:241.12px;font-family:'Liberation Sans','Noto Sans CJK KR',sans-serif;font-size:11.4px;color:#a0a0a0;font-weight:400;letter-spacing:0.108px;">routers</span><span class="t" style="left:103.75px;top:262.86px;font-family:'Liberation Sans','Noto Sans CJK KR',sans-serif;font-size:13px;color:#ffffff;font-weight:400;letter-spacing:-0.118px;">globalRouter.js</span><span class="t" style="left:194.10px;top:262.96px;font-family:'Liberation Sans','Noto Sans CJK KR',sans-serif;font-size:11.4px;color:#a0a0a0;font-weight:400;letter-spacing:0.124px;">routers</span><span class="t" style="left:81.80px;top:306.42px;font-family:'Liberation Sans','Noto Sans CJK KR',sans-serif;font-size:13px;color:#e6e6e6;font-weight:400;letter-spacing:0.023px;">controllers</span><span class="t" style="left:89.80px;top:328.25px;font-family:'Liberation Sans','Noto Sans CJK KR',sans-serif;font-size:13px;color:#e6e6e6;font-weight:400;letter-spacing:-0.203px;">userControllers.js</span><span class="t" style="left:89.80px;top:350.08px;font-family:'Liberation Sans','Noto Sans CJK KR',sans-serif;font-size:13px;color:#e6e6e6;font-weight:400;letter-spacing:-0.124px;">videoControllers.js</span><span class="t" style="left:81.80px;top:371.91px;font-family:'Liberation Sans','Noto Sans CJK KR',sans-serif;font-size:13px;color:#e6e6e6;font-weight:400;letter-spacing:-0.191px;">node_modules</span><span class="t" style="left:81.80px;top:393.74px;font-family:'Liberation Sans','Noto Sans CJK KR',sans-serif;font-size:13px;color:#e6e6e6;font-weight:400;letter-spacing:0.039px;">routers</span><span class="t" style="left:89.80px;top:415.56px;font-family:'Liberation Sans','Noto Sans CJK KR',sans-serif;font-size:13px;color:#f4f4f4;font-weight:400;letter-spacing:-0.111px;">globalRouter.js</span><span class="t" style="left:89.80px;top:437.39px;font-family:'Liberation Sans','Noto Sans CJK KR',sans-serif;font-size:13px;color:#e6e6e6;font-weight:400;letter-spacing:-0.283px;">userRouter.js</span><span class="t" style="left:89.80px;top:459.23px;font-family:'Liberation Sans','Noto Sans CJK KR',sans-serif;font-size:13px;color:#e6e6e6;font-weight:400;letter-spacing:-0.169px;">videoRouter.js</span><span class="t" style="left:81.80px;top:481.06px;font-family:'Liberation Sans','Noto Sans CJK KR',sans-serif;font-size:13px;color:#e6e6e6;font-weight:400;letter-spacing:0.000px;transform:scaleX(0.9442);transform-origin:0 50%;">views</span><span class="t" style="left:81.80px;top:502.88px;font-family:'Liberation Sans','Noto Sans CJK KR',sans-serif;font-size:13px;color:#e6e6e6;font-weight:400;letter-spacing:-0.150px;">.babelrc</span><span class="t" style="left:81.80px;top:524.72px;font-family:'Liberation Sans','Noto Sans CJK KR',sans-serif;font-size:13px;color:#e6e6e6;font-weight:400;letter-spacing:0.000px;transform:scaleX(0.9567);transform-origin:0 50%;">app.js</span><span class="t" style="left:81.80px;top:546.55px;font-family:'Liberation Sans','Noto Sans CJK KR',sans-serif;font-size:13px;color:#e6e6e6;font-weight:400;letter-spacing:-0.037px;">init.js</span><span class="t" style="left:81.80px;top:568.38px;font-family:'Liberation Sans','Noto Sans CJK KR',sans-serif;font-size:13px;color:#e6e6e6;font-weight:400;letter-spacing:-0.183px;">middlewares.js</span><span class="t" style="left:81.80px;top:590.20px;font-family:'Liberation Sans','Noto Sans CJK KR',sans-serif;font-size:13px;color:#e6e6e6;font-weight:400;letter-spacing:-0.129px;">package-lock.json</span><span class="t" style="left:81.80px;top:612.04px;font-family:'Liberation Sans','Noto Sans CJK KR',sans-serif;font-size:13px;color:#e6e6e6;font-weight:400;letter-spacing:-0.284px;">package.json</span><span class="t" style="left:417.50px;top:37.80px;font-family:'Liberation Sans','Noto Sans CJK KR',sans-serif;font-size:13px;color:#a2a2a2;font-weight:400;letter-spacing:0.141px;">logout.pug</span><span class="t" style="left:540.50px;top:37.80px;font-family:'Liberation Sans','Noto Sans CJK KR',sans-serif;font-size:13px;color:#a2a2a2;font-weight:400;letter-spacing:0.121px;">login.pug</span><span class="t" style="left:655.50px;top:37.80px;font-family:'Liberation Sans','Noto Sans CJK KR',sans-serif;font-size:13px;color:#a2a2a2;font-weight:400;letter-spacing:-0.244px;">userControllers.js</span><span class="t" style="left:813.25px;top:37.80px;font-family:'Liberation Sans','Noto Sans CJK KR',sans-serif;font-size:13px;color:#a2a2a2;font-weight:400;letter-spacing:-0.299px;">userRouter.js</span><span class="t" style="left:947.00px;top:37.80px;font-family:'Liberation Sans','Noto Sans CJK KR',sans-serif;font-size:13px;color:#ffffff;font-weight:400;letter-spacing:-0.071px;">globalRouter.js</span><span class="t" style="left:1092.50px;top:37.80px;font-family:'Liberation Sans','Noto Sans CJK KR',sans-serif;font-size:13px;color:#a2a2a2;font-weight:400;letter-spacing:0.080px;">vide</span><span class="t" style="left:392.50px;top:385.20px;font-family:'Liberation Sans','Noto Sans CJK KR',sans-serif;font-size:11.6px;color:#989898;font-weight:400;letter-spacing:0.156px;">문제</span><span class="t" style="left:434.50px;top:385.20px;font-family:'Liberation Sans','Noto Sans CJK KR',sans-serif;font-size:11.6px;color:#989898;font-weight:400;letter-spacing:0.406px;">출력</span><span class="t" style="left:477.00px;top:385.20px;font-family:'Liberation Sans','Noto Sans CJK KR',sans-serif;font-size:11.6px;color:#989898;font-weight:400;letter-spacing:-0.062px;">디버그 콘솔</span><span class="t" style="left:554.00px;top:385.20px;font-family:'Liberation Sans','Noto Sans CJK KR',sans-serif;font-size:11.6px;color:#ececec;font-weight:400;letter-spacing:0.125px;">터미널</span><span class="t" style="left:957.30px;top:385.60px;font-family:'Liberation Sans','Noto Sans CJK KR',sans-serif;font-size:12.6px;color:#f0f0f0;font-weight:400;letter-spacing:0.123px;">1: powershell</span><span class="t" style="left:26.30px;top:647.90px;font-family:'Liberation Sans','Noto Sans CJK KR',sans-serif;font-size:12.3px;color:#fff;font-weight:400;letter-spacing:0.000px;">0</span><span class="t" style="left:52.50px;top:647.90px;font-family:'Liberation Sans','Noto Sans CJK KR',sans-serif;font-size:12.3px;color:#fff;font-weight:400;letter-spacing:0.000px;">0</span><span class="t" style="left:944.00px;top:647.90px;font-family:'Liberation Sans','Noto Sans CJK KR',sans-serif;font-size:12.3px;color:#fff;font-weight:400;letter-spacing:-0.226px;">줄 11, 열 1</span><span class="t" style="left:1014.40px;top:647.90px;font-family:'Liberation Sans','Noto Sans CJK KR',sans-serif;font-size:12.3px;color:#fff;font-weight:400;letter-spacing:-0.253px;">공백: 4</span><span class="t" style="left:1064.40px;top:647.90px;font-family:'Liberation Sans','Noto Sans CJK KR',sans-serif;font-size:12.3px;color:#fff;font-weight:400;letter-spacing:0.000px;transform:scaleX(0.8954);transform-origin:0 50%;">UTF-8</span><span class="t" style="left:1110.60px;top:647.90px;font-family:'Liberation Sans','Noto Sans CJK KR',sans-serif;font-size:12.3px;color:#fff;font-weight:400;letter-spacing:0.000px;transform:scaleX(0.8187);transform-origin:0 50%;">CRLF</span><span class="t" style="left:1151.25px;top:647.90px;font-family:'Liberation Sans','Noto Sans CJK KR',sans-serif;font-size:12.3px;color:#fff;font-weight:400;letter-spacing:0.000px;transform:scaleX(0.9082);transform-origin:0 50%;">JavaScript</span>

</div></body></html>
